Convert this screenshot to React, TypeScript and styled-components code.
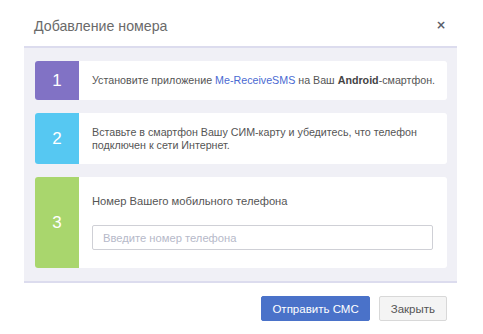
import React from 'react';
import styled, { createGlobalStyle } from 'styled-components';

const GlobalStyle = createGlobalStyle`
    html, body {
        margin: 0;
        padding: 0;
        background: #fff;
    }
    body {
        font-family: "Liberation Sans", Arial, sans-serif;
    }
`;

const Modal = styled.div`
    width: 433px;
    margin: 0 auto 0 24px;
`;

const Header = styled.div`
    height: 46px;
    display: flex;
    align-items: center;
    justify-content: space-between;
    padding: 0 11px 0 10px;
    border-bottom: 2px solid #dcdcee;
    box-sizing: content-box;
`;

const Title = styled.h4`
    margin: 0;
    padding-top: 6px;
    font-size: 14.2px;
    font-weight: 400;
    color: #6a6a6a;
`;

const CloseX = styled.button`
    border: 0;
    background: none;
    padding: 0;
    margin-top: 4px;
    font-family: "DejaVu Sans", sans-serif;
    font-size: 12px;
    font-weight: 700;
    line-height: 1;
    color: #5a5e6a;
    cursor: pointer;
`;

const Body = styled.div`
    background: #f0f0f6;
    padding: 13px 10px 13px 11px;
    display: flex;
    flex-direction: column;
    gap: 13px;
    border-bottom: 2px solid #dcdcee;
`;

const Step = styled.div<{ $h: number }>`
    display: flex;
    min-height: ${p => p.$h}px;
    background: #fff;
    border-radius: 3px;
    overflow: hidden;
`;

const StepNum = styled.div<{ $color: string }>`
    flex: 0 0 44px;
    background: ${p => p.$color};
    color: #fff;
    font-size: 17px;
    display: flex;
    align-items: center;
    justify-content: center;
`;

const StepText = styled.div`
    flex: 1;
    display: flex;
    flex-direction: column;
    justify-content: center;
    padding: 0 8px 0 13px;
    font-size: 10.7px;
    line-height: 13px;
    color: #555;

    a {
        color: #4a6ad2;
        text-decoration: none;
    }
    b {
        color: #444;
    }
`;

const FieldBlock = styled.div`
    flex: 1;
    padding: 18px 14px 18px 13px;
    display: flex;
    flex-direction: column;
    gap: 17px;
`;

const Label = styled.div`
    font-size: 11.2px;
    line-height: 13px;
    color: #555;
`;

const Input = styled.input`
    height: 25px;
    box-sizing: border-box;
    border: 1px solid #cfd0d6;
    border-radius: 2px;
    padding: 0 10px;
    font-family: inherit;
    font-size: 11.2px;
    color: #444;
    outline: none;

    &::placeholder {
        color: #b6b9c9;
    }
`;

const Footer = styled.div`
    display: flex;
    justify-content: flex-end;
    gap: 9px;
    padding: 13px 10px 0 0;
`;

const Button = styled.button<{ $primary?: boolean }>`
    height: 25px;
    padding: 0 ${p => (p.$primary ? 10 : 11)}px;
    border-radius: 2px;
    font-family: inherit;
    font-size: 11.5px;
    border: 1px solid ${p => (p.$primary ? '#4a72c9' : '#d8d8d8')};
    background: ${p => (p.$primary ? '#4a72c9' : '#f4f4f4')};
    color: ${p => (p.$primary ? '#fff' : '#555')};
    cursor: pointer;
`;

export default function App() {
    return (
        <>
            <GlobalStyle />
            <Modal>
                <Header>
                    <Title>Добавление номера</Title>
                    <CloseX aria-label="close">×</CloseX>
                </Header>
                <Body>
                    <Step $h={39}>
                        <StepNum $color="#8172c5">1</StepNum>
                        <StepText>
                            <div>
                                Установите приложение <a href="#">Me-ReceiveSMS</a> на Ваш <b>Android</b>-смартфон.
                            </div>
                        </StepText>
                    </Step>
                    <Step $h={51}>
                        <StepNum $color="#56c8f2">2</StepNum>
                        <StepText>
                            <div>
                                Вставьте в смартфон Вашу СИМ-карту и убедитесь, что телефон подключен к сети Интернет.
                            </div>
                        </StepText>
                    </Step>
                    <Step $h={91}>
                        <StepNum $color="#a9d66d">3</StepNum>
                        <FieldBlock>
                            <Label>Номер Вашего мобильного телефона</Label>
                            <Input placeholder="Введите номер телефона" />
                        </FieldBlock>
                    </Step>
                </Body>
                <Footer>
                    <Button $primary>Отправить СМС</Button>
                    <Button>Закрыть</Button>
                </Footer>
            </Modal>
        </>
    );
}
